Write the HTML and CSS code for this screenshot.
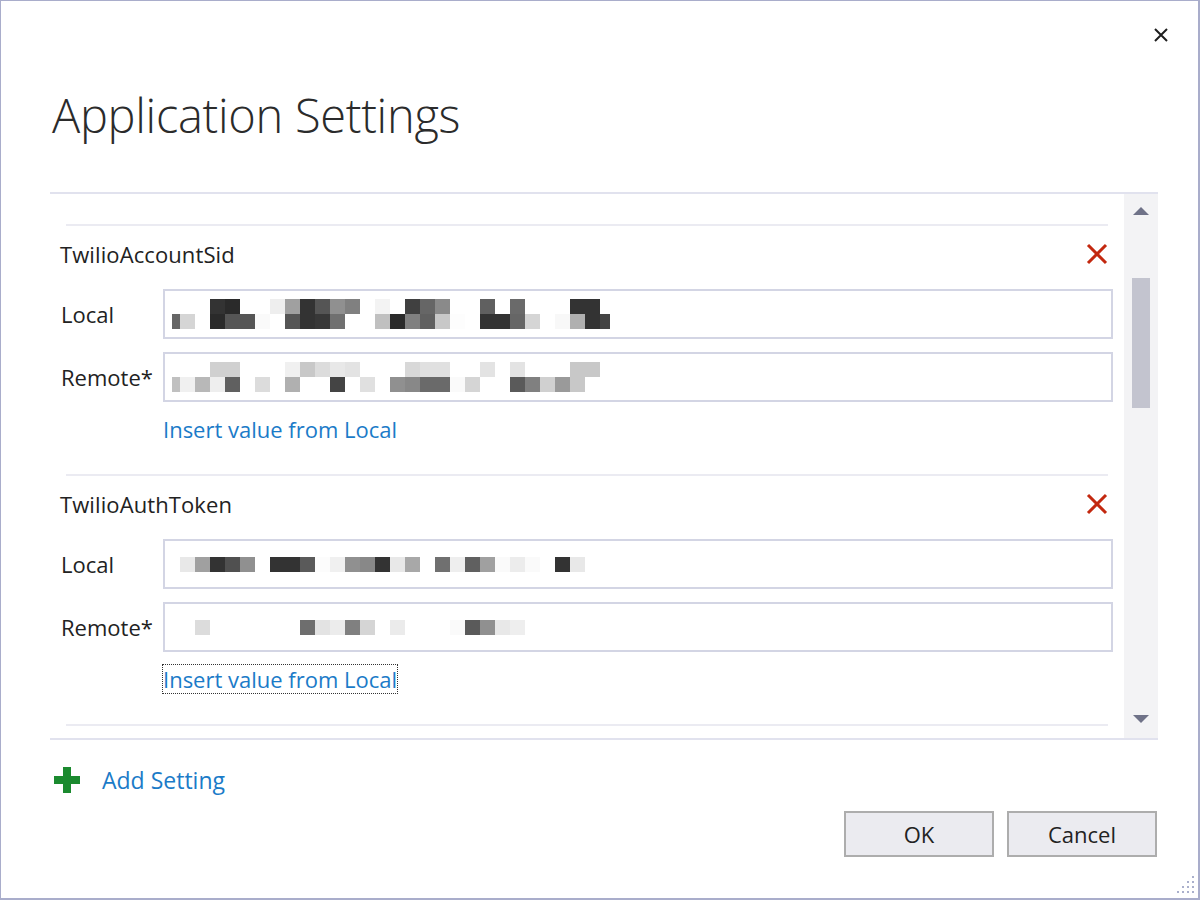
FILE: index.html
```html
<!DOCTYPE html>
<html>
<head>
<meta charset="utf-8">
<title>Application Settings</title>
<link rel="stylesheet" href="styles.css">
</head>
<body>
<div class="window">
  <div class="header">
    <button class="close" aria-label="Close">
      <svg width="16" height="16" viewBox="0 0 16 16"><path d="M2 2L14 14M14 2L2 14" stroke="#1e1e1e" stroke-width="2" fill="none"/></svg>
    </button>
    <h1 class="title">Application Settings</h1>
  </div>

  <div class="scroller">
    <div class="list">
      <div class="setting">
        <div class="sep"></div>
        <div class="name-row">
          <span class="name">TwilioAccountSid</span>
          <svg class="remove" width="22" height="22" viewBox="0 0 22 22"><path d="M2 2L20 20M20 2L2 20" stroke="#c3280f" stroke-width="3" fill="none"/></svg>
        </div>
        <div class="field">
          <span class="label">Local</span>
          <div class="input">
            <div class="mosaic">
              <div class="mrow"><i class="p"></i><i></i><i></i><i style="background:#333"></i><i style="background:#2a2a2a"></i><i></i><i></i><i style="background:#eee"></i><i style="background:#a0a0a0"></i><i style="background:#333"></i><i style="background:#555"></i><i style="background:#909090"></i><i style="background:#808080"></i><i></i><i style="background:#f3f3f3"></i><i></i><i style="background:#404040"></i><i style="background:#666"></i><i style="background:#8a8a8a"></i><i></i><i></i><i style="background:#606060"></i><i></i><i style="background:#6a6a6a"></i><i></i><i></i><i></i><i style="background:#333"></i><i style="background:#333"></i><i class="e"></i></div>
              <div class="mrow"><i class="p" style="background:#666"></i><i style="background:#d5d5d5"></i><i></i><i style="background:#2a2a2a"></i><i style="background:#555"></i><i style="background:#555"></i><i style="background:#fafafa"></i><i></i><i style="background:#555"></i><i style="background:#333"></i><i style="background:#383838"></i><i style="background:#707070"></i><i></i><i></i><i style="background:#c0c0c0"></i><i style="background:#2a2a2a"></i><i style="background:#808080"></i><i style="background:#606060"></i><i style="background:#c8c8c8"></i><i style="background:#fdfdfd"></i><i></i><i style="background:#333"></i><i style="background:#333"></i><i style="background:#666"></i><i style="background:#d5d5d5"></i><i></i><i style="background:#f8f8f8"></i><i style="background:#b0b0b0"></i><i style="background:#333"></i><i class="e" style="background:#444"></i></div>
            </div>
          </div>
        </div>
        <div class="field">
          <span class="label">Remote*</span>
          <div class="input">
            <div class="mosaic">
              <div class="mrow"><i class="p"></i><i></i><i></i><i style="background:#d0d0d0"></i><i style="background:#d0d0d0"></i><i></i><i></i><i></i><i style="background:#f0f0f0"></i><i style="background:#c8c8c8"></i><i style="background:#dcdcdc"></i><i style="background:#e8e8e8"></i><i style="background:#e3e3e3"></i><i></i><i></i><i></i><i style="background:#d8d8d8"></i><i style="background:#e0e0e0"></i><i style="background:#e0e0e0"></i><i></i><i></i><i style="background:#e3e3e3"></i><i></i><i style="background:#e3e3e3"></i><i></i><i></i><i></i><i style="background:#c8c8c8"></i><i style="background:#c8c8c8"></i></div>
              <div class="mrow"><i class="p" style="background:#c0c0c0"></i><i style="background:#f0f0f0"></i><i style="background:#b8b8b8"></i><i style="background:#eee"></i><i style="background:#606060"></i><i></i><i style="background:#dcdcdc"></i><i></i><i style="background:#b0b0b0"></i><i></i><i></i><i style="background:#444"></i><i></i><i style="background:#e0e0e0"></i><i></i><i style="background:#909090"></i><i style="background:#888"></i><i style="background:#6a6a6a"></i><i style="background:#6a6a6a"></i><i style="background:#fafafa"></i><i style="background:#d5d5d5"></i><i></i><i></i><i style="background:#5a5a5a"></i><i style="background:#808080"></i><i style="background:#d0d0d0"></i><i style="background:#9a9a9a"></i><i style="background:#c8c8c8"></i></div>
            </div>
          </div>
        </div>
        <div class="link-row"><a class="link" href="#">Insert value from Local</a></div>
      </div>

      <div class="setting">
        <div class="sep"></div>
        <div class="name-row">
          <span class="name">TwilioAuthToken</span>
          <svg class="remove" width="22" height="22" viewBox="0 0 22 22"><path d="M2 2L20 20M20 2L2 20" stroke="#c3280f" stroke-width="3" fill="none"/></svg>
        </div>
        <div class="field">
          <span class="label">Local</span>
          <div class="input">
            <div class="mosaic">
              <div class="mrow"><i class="p"></i><i style="background:#e8e8e8"></i><i style="background:#a0a0a0"></i><i style="background:#333"></i><i style="background:#505050"></i><i style="background:#909090"></i><i></i><i style="background:#333"></i><i style="background:#333"></i><i style="background:#5a5a5a"></i><i style="background:#fcfcfc"></i><i style="background:#f0f0f0"></i><i style="background:#909090"></i><i style="background:#888"></i><i style="background:#333"></i><i style="background:#e8e8e8"></i><i style="background:#a8a8a8"></i><i></i><i style="background:#707070"></i><i style="background:#eee"></i><i style="background:#606060"></i><i style="background:#a0a0a0"></i><i style="background:#fafafa"></i><i style="background:#ececec"></i><i style="background:#fafafa"></i><i></i><i style="background:#333"></i><i style="background:#e8e8e8"></i></div>
            </div>
          </div>
        </div>
        <div class="field">
          <span class="label">Remote*</span>
          <div class="input">
            <div class="mosaic">
              <div class="mrow"><i class="p"></i><i></i><i style="background:#dcdcdc"></i><i></i><i></i><i></i><i></i><i></i><i></i><i style="background:#6e6e6e"></i><i style="background:#e3e3e3"></i><i style="background:#ececec"></i><i style="background:#808080"></i><i style="background:#d5d5d5"></i><i></i><i style="background:#ebebeb"></i><i></i><i></i><i></i><i style="background:#fafafa"></i><i style="background:#5a5a5a"></i><i style="background:#909090"></i><i style="background:#e8e8e8"></i><i style="background:#eee"></i></div>
            </div>
          </div>
        </div>
        <div class="link-row"><a class="link focused" href="#">Insert value from Local</a></div>
      </div>

      <div class="setting">
        <div class="sep"></div>
        <div class="name-row name-row-end">
          <svg class="remove" width="22" height="22" viewBox="0 0 22 22"><path d="M2 2L20 20M20 2L2 20" stroke="#c3280f" stroke-width="3" fill="none"/></svg>
        </div>
      </div>
    </div>

    <div class="scrollbar">
      <svg class="arrow" width="18" height="10" viewBox="0 0 18 10"><path d="M1 9L9 1L17 9Z" fill="#6f7288"/></svg>
      <div class="track"><div class="thumb"></div></div>
      <svg class="arrow" width="18" height="10" viewBox="0 0 18 10"><path d="M1 1L9 9L17 1Z" fill="#6f7288"/></svg>
    </div>
  </div>

  <div class="footer">
    <a class="add" href="#">
      <svg width="28" height="28" viewBox="0 0 28 28"><path d="M10 1H18V10H27V18H18V27H10V18H1V10H10Z" fill="#1b8a2f"/></svg>
      <span>Add Setting</span>
    </a>
    <div class="buttons">
      <button class="btn">OK</button>
      <button class="btn">Cancel</button>
    </div>
  </div>

  <svg class="grip" width="28" height="24" viewBox="0 0 28 24">
    <g fill="#aab0cc">
      <rect x="24" y="2" width="2" height="2"/>
      <rect x="24" y="7" width="2" height="2"/><rect x="19" y="7" width="2" height="2"/>
      <rect x="24" y="12" width="2" height="2"/><rect x="19" y="12" width="2" height="2"/><rect x="14" y="12" width="2" height="2"/>
      <rect x="24" y="17" width="2" height="2"/><rect x="19" y="17" width="2" height="2"/><rect x="14" y="17" width="2" height="2"/><rect x="9" y="17" width="2" height="2"/>
    </g>
  </svg>
</div>
</body>
</html>
```

FILE: styles.css
```css
* { box-sizing: border-box; }
html, body { margin: 0; padding: 0; }
body {
  width: 1200px;
  height: 900px;
  background: #ffffff;
  font-family: "Open Sans", "Noto Sans", "Liberation Sans", sans-serif;
  color: #222;
  overflow: hidden;
}
.window {
  position: relative;
  width: 1200px;
  height: 900px;
  border: 2px solid #a9adcb;
  border-top-width: 1px;
  border-left-width: 1px;
  background: #fff;
  padding: 0 40px 0 49px;
  display: flex;
  flex-direction: column;
}
.header {
  height: 191px;
  display: flex;
  flex-direction: column;
}
.close {
  align-self: flex-end;
  margin: 26px -11px 0 0;
  width: 16px;
  height: 16px;
  padding: 0;
  border: 0;
  background: none;
  display: flex;
}
.title {
  margin: 42px 0 0 2px;
  font-family: "Open Sans", "Noto Sans", sans-serif;
  font-weight: 300;
  font-size: 47px;
  line-height: 60px;
  color: #2b2b2b;
  letter-spacing: -0.3px;
}
.scroller {
  height: 548px;
  border-top: 2px solid #e1e2ee;
  border-bottom: 2px solid #e1e2ee;
  display: flex;
  overflow: hidden;
}
.list {
  flex: 1;
  padding-top: 30px;
  overflow: hidden;
}
.setting {
  padding: 0 11px 0 10px;
}
.sep {
  height: 2px;
  margin: 0 5px 0 6px;
  background: #ebebf2;
}
.name-row {
  display: flex;
  align-items: center;
  justify-content: space-between;
  height: 28px;
  margin-top: 14px;
  padding-right: 5px;
}
.name-row-end {
  justify-content: flex-end;
  margin-top: 12px;
}
.name {
  font-size: 22px;
  line-height: 28px;
  color: #222;
  letter-spacing: 0.1px;
}
.remove { display: block; }
.field {
  display: flex;
  align-items: center;
  margin-top: 13px;
}
.name-row + .field { margin-top: 21px; }
.label {
  width: 103px;
  font-size: 22px;
  line-height: 28px;
  color: #222;
  padding-left: 1px;
}
.input {
  flex: 1;
  height: 50px;
  border: 2px solid #d3d5e4;
  padding: 0 7px;
  display: flex;
  align-items: center;
}
.mosaic { display: flex; flex-direction: column; }
.mrow { display: flex; height: 15px; }
.mrow i { width: 15px; height: 15px; display: block; }
.mrow i.p { width: 8px; }
.mrow i.e { width: 10px; }
.link-row {
  margin-top: 12px;
  padding-left: 103px;
  height: 30px;
  margin-bottom: 30px;
  display: flex;
}
.link {
  font-size: 22px;
  line-height: 28px;
  color: #1b7bc8;
  text-decoration: none;
  border: 1px solid transparent;
  margin-left: -1px;
}
.link.focused { border: 1px dotted #333; }
.scrollbar {
  width: 34px;
  background: #f3f3f5;
  display: flex;
  flex-direction: column;
  align-items: center;
  padding: 12px 0 14px;
}
.arrow { display: block; }
.track {
  flex: 1;
  width: 100%;
  display: flex;
  justify-content: center;
  padding-top: 62px;
}
.thumb {
  width: 18px;
  height: 130px;
  background: #c3c4cf;
}
.footer {
  flex: 1;
  display: flex;
  flex-direction: column;
}
.add {
  display: flex;
  align-items: center;
  margin-top: 26px;
  margin-left: 3px;
  text-decoration: none;
  color: #1b7bc8;
  font-size: 23px;
  line-height: 28px;
}
.add svg { display: block; margin-right: 21px; }
.buttons {
  display: flex;
  justify-content: flex-end;
  gap: 13px;
  margin-top: 17px;
  margin-right: 1px;
}
.btn {
  width: 150px;
  height: 46px;
  background: #ebebf0;
  border: 2px solid #adadad;
  font-family: "Open Sans", "Noto Sans", sans-serif;
  font-size: 22px;
  color: #222;
  padding: 0;
}
.grip {
  position: absolute;
  right: 2px;
  bottom: 0;
}
```
